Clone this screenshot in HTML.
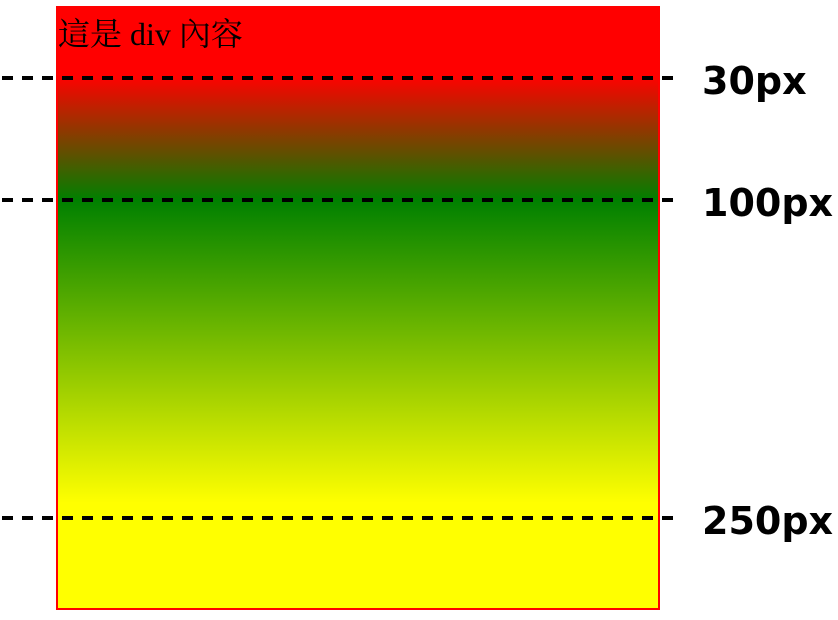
<!DOCTYPE html>
<html><head><meta charset="utf-8"><style>
body{margin:0;width:838px;height:620px;background:#fff;position:relative;overflow:hidden}
.box{position:absolute;left:56px;top:6px;width:600px;height:602px;border:2px solid red;border-top:0;
background:linear-gradient(to bottom,red 0px,red 70px,green 194px,#ff0 497px,#ff0 100%);}
.t{position:absolute;left:0px;top:3px;font:32px "Liberation Serif","Noto Serif CJK SC",serif;color:#000}
.line{position:absolute;left:2px;width:676px;height:4px;background:repeating-linear-gradient(to right,#000 0 11px,transparent 11px 20px)}
.lb{position:absolute;left:702px;font:bold 38px "DejaVu Sans",sans-serif;color:#000;line-height:1}
</style></head><body>
<div class="box"><div class="t">這是 div 內容</div></div>
<div class="line" style="top:76px"></div>
<div class="line" style="top:198px"></div>
<div class="line" style="top:516px"></div>
<div class="lb" style="top:62px">30px</div>
<div class="lb" style="top:184px">100px</div>
<div class="lb" style="top:502px">250px</div>
</body></html>
